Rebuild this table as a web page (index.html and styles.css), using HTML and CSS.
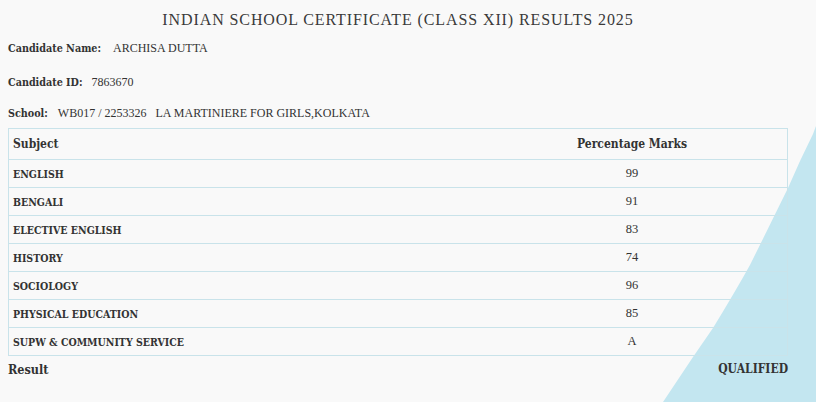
FILE: index.html
```html
<!DOCTYPE html>
<html>
<head>
<meta charset="utf-8">
<link rel="stylesheet" href="styles.css">
</head>
<body>
<svg class="deco" width="160" height="280" viewBox="656 122 160 280" aria-hidden="true">
  <path d="M816 126 L813 134 Q800 160 788 188 L750 265 Q735 292 713 328 L693 357 L663 402 L816 402 Z" fill="#c3e6f0"/>
</svg>
<main class="page">
  <h1 class="title">INDIAN SCHOOL CERTIFICATE (CLASS XII) RESULTS 2025</h1>
  <div class="info">
    <p class="line line-name"><span class="label">Candidate Name:</span><span class="value gap-l">ARCHISA DUTTA</span></p>
    <p class="line line-id"><span class="label">Candidate ID:</span><span class="value gap-m">7863670</span></p>
    <p class="line line-school"><span class="label">School:</span><span class="value gap-s">WB017 / 2253326</span><span class="value gap-m">LA MARTINIERE FOR GIRLS,KOLKATA</span></p>
  </div>
  <table class="marks">
    <thead>
      <tr><th class="c-subj">Subject</th><th class="c-mark">Percentage Marks</th></tr>
    </thead>
    <tbody>
      <tr><td class="c-subj">ENGLISH</td><td class="c-mark">99</td></tr>
      <tr><td class="c-subj">BENGALI</td><td class="c-mark">91</td></tr>
      <tr><td class="c-subj">ELECTIVE ENGLISH</td><td class="c-mark">83</td></tr>
      <tr><td class="c-subj">HISTORY</td><td class="c-mark">74</td></tr>
      <tr><td class="c-subj">SOCIOLOGY</td><td class="c-mark">96</td></tr>
      <tr><td class="c-subj">PHYSICAL EDUCATION</td><td class="c-mark">85</td></tr>
      <tr><td class="c-subj">SUPW &amp; COMMUNITY SERVICE</td><td class="c-mark">A</td></tr>
    </tbody>
  </table>
  <div class="result">
    <span class="result-label">Result</span>
    <span class="result-value">QUALIFIED</span>
  </div>
</main>
</body>
</html>
```
FILE: styles.css
```css
html, body {
  margin: 0;
  padding: 0;
  background: #f9f9f9;
  color: #333;
}
body {
  position: relative;
  width: 816px;
  height: 402px;
  overflow: hidden;
}
.deco {
  position: absolute;
  right: 0;
  bottom: 0;
  z-index: 0;
}
.page {
  position: relative;
  z-index: 1;
  padding: 0 28px 0 8px;
  display: flex;
  flex-direction: column;
}
.title {
  margin: 10px 0 0;
  font-family: "Liberation Serif", serif;
  font-weight: normal;
  font-size: 16px;
  line-height: 20px;
  letter-spacing: 0.9px;
  text-align: center;
  color: #3a3a3a;
}
.info {
  display: flex;
  flex-direction: column;
}
.line {
  margin: 0;
  height: 20px;
  display: flex;
  align-items: center;
}
.line-name { margin-top: 8px; }
.line-id { margin-top: 14px; }
.line-school { margin-top: 11px; }
.label {
  font-family: "DejaVu Serif", serif;
  font-stretch: condensed;
  font-weight: bold;
  font-size: 10.7px;
  color: #333;
}
.value {
  font-family: "Liberation Serif", serif;
  font-size: 12px;
  color: #333;
}
.gap-l { margin-left: 12px; }
.gap-m { margin-left: 9px; }
.gap-s { margin-left: 10px; }
.marks {
  margin-top: 5px;
  width: 780px;
  border-collapse: collapse;
  table-layout: fixed;
  border: 1px solid #c9e3ea;
}
.marks th, .marks td {
  border-top: 1px solid #c9e3ea;
  border-bottom: 1px solid #c9e3ea;
  padding: 0 4px;
  color: #333;
}
.marks th {
  height: 30px;
  font-family: "DejaVu Serif", serif;
  font-stretch: condensed;
  font-weight: 600;
  font-size: 12px;
}
.marks td {
  height: 27px;
}
.c-subj {
  width: 460px;
  text-align: left;
}
.marks td.c-subj {
  font-family: "DejaVu Serif", serif;
  font-stretch: condensed;
  font-weight: bold;
  font-size: 10.5px;
}
.c-mark {
  text-align: center;
}
.marks td.c-mark {
  font-family: "Liberation Serif", serif;
  font-size: 12.5px;
}
.result {
  width: 780px;
  display: flex;
  justify-content: space-between;
  align-items: center;
  height: 26px;
}
.result-label {
  font-family: "DejaVu Serif", serif;
  font-stretch: condensed;
  font-weight: 600;
  font-size: 12.5px;
}
.result-value {
  font-family: "DejaVu Serif", serif;
  font-stretch: condensed;
  font-weight: bold;
  font-size: 12px;
}
```
